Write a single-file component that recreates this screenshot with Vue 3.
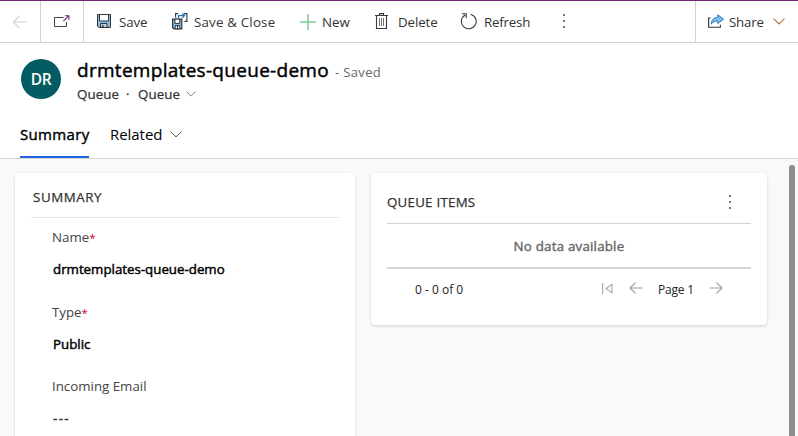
<script setup>
const fields = [
  { label: 'Name', required: true, value: 'drmtemplates-queue-demo', cls: 'name' },
  { label: 'Type', required: true, value: 'Public', cls: 'type' },
  { label: 'Incoming Email', required: false, value: '---', cls: 'email' },
]
</script>

<template>
  <div class="app">
    <header class="toolbar">
      <button class="cell back">
        <svg width="16" height="14" viewBox="0 0 16 14" fill="none" stroke="#d2d2d2" stroke-width="1.2"><path d="M7.5 .8 1.3 7l6.2 6.2M1.3 7H15" /></svg>
      </button>
      <button class="cell popout">
        <svg width="16" height="13" viewBox="0 0 16 13" fill="none"><path d="M9.5 2.5H.5v9h12V7" stroke="#4b3a50" stroke-width="1" /><path d="M9.4 6.2 14.4 1.2M11 .7h3.9v4" stroke="#742774" stroke-width="1.1" /></svg>
      </button>
      <div class="commands">
        <svg class="i-save" width="14" height="14" viewBox="0 0 14 14"><path d="M.5.5h13v13H1.8L.5 12.2z" fill="#83beec" stroke="#333" stroke-width="1" /><path d="M2.5.5h9v6.5h-9z" fill="#fff" stroke="#333" /><path d="M3.5 9.5h6.5v4H3.5z" fill="#ccc" stroke="#333" /><path d="M5 11.3h1.6v2.2H5z" fill="#333" /></svg>
        <span class="t t-save">Save</span>
        <svg class="i-saveclose" width="16" height="17" viewBox="0 0 16 17"><path d="M.6 6.1h9.2v9.8H2L.6 14.7z" fill="#83beec" stroke="#333" stroke-width="1.2" /><path d="M2.9 6.1h4.8v4.3H2.9z" fill="#fff" stroke="#333" /><path d="M3.2 12.6h4.5v3.3H3.2z" fill="#fff" stroke="#333" /><path d="M5.5 13v3" stroke="#333" /><path d="M6 .6H3.6v3.8M12 .6h2.9v7.8h-2.5" fill="none" stroke="#333" stroke-width="1.1" /><path d="M6.5 5V2.6h6M10.3.5l2.2 2.1-2.2 2.2" fill="none" stroke="#1473bd" stroke-width="1.2" /></svg>
        <span class="t t-sc">Save &amp; Close</span>
        <svg class="i-new" width="16" height="16" viewBox="0 0 16 16"><path d="M8 0v16M0 8h16" stroke="#79cd9b" stroke-width="1.5" /></svg>
        <span class="t t-new">New</span>
        <svg class="i-del" width="13" height="16" viewBox="0 0 13 16" fill="none" stroke="#3b3a39" stroke-width="1.1"><path d="M0 2.5h13M4.5 2.5V.6h4v1.9M1.5 2.5v13h10v-13" /><path d="M4.5 5v8M6.5 5v8M8.5 5v8" stroke-width=".7" /></svg>
        <span class="t t-del">Delete</span>
        <svg class="i-ref" width="17" height="17" viewBox="0 0 17 17" fill="none" stroke="#3b3a39" stroke-width="1.1"><path d="M10.6 1.2a7.4 7.4 0 1 1-5.4.7M2 .7h4.2v4.2" /></svg>
        <span class="t t-ref">Refresh</span>
        <span class="dots"><i /><i /><i /></span>
      </div>
      <button class="cell share">
        <svg width="17" height="14" viewBox="0 0 17 14"><path d="M2.5 4H.6v9.3h11.8v-2.5" fill="none" stroke="#333" stroke-width="1.1" /><path d="M9.8.8 15.6 5.2 9.8 9.5V7.1C6.5 7 4.7 8 3.2 10.2 3.5 6 5.8 3.6 9.8 3.3z" fill="#83beec" stroke="#1b6bb0" stroke-width=".9" /></svg>
        <span class="t t-share">Share</span>
        <svg width="12" height="7" viewBox="0 0 12 7" fill="none" stroke="#ad7642" stroke-width="1.1"><path d="m.5.6 5.5 5.3L11.5.6" /></svg>
      </button>
    </header>

    <section class="record">
      <div class="identity">
        <div class="avatar"><span>DR</span></div>
        <div class="titles">
          <div class="title-row"><h1>drmtemplates-queue-demo</h1><span class="saved">- Saved</span></div>
          <div class="sub"><span class="q1">Queue</span><span class="dot">·</span><span class="q2">Queue</span>
            <svg width="10" height="6" viewBox="0 0 10 6" fill="none" stroke="#777" stroke-width=".9"><path d="m.4.5 4.6 4.6L9.6.5" /></svg>
          </div>
        </div>
      </div>
      <nav class="tabs">
        <span class="tab active">Summary</span>
        <span class="tab related">Related</span>
        <svg width="12" height="7" viewBox="0 0 12 7" fill="none" stroke="#555b36" stroke-width="1"><path d="m.5.6 5.5 5.3L11.5.6" /></svg>
      </nav>
    </section>

    <main class="body">
      <section class="card summary">
        <h2>SUMMARY</h2>
        <div v-for="f in fields" :key="f.label" class="field" :class="f.cls">
          <div class="label">{{ f.label }}<b v-if="f.required">*</b></div>
          <div class="value">{{ f.value }}</div>
        </div>
      </section>
      <section class="card queue">
        <div class="queue-head"><h2>QUEUE ITEMS</h2><span class="dots"><i /><i /><i /></span></div>
        <div class="empty"><span>No data available</span></div>
        <div class="pager">
          <span class="count">0 - 0 of 0</span>
          <svg class="first" width="11" height="11" viewBox="0 0 11 11" fill="none" stroke="#a3aaa0" stroke-width="1.1"><path d="M.6 0v11M10 1.2v8.6L4 5.5z" /></svg>
          <svg class="prev" width="14" height="12" viewBox="0 0 14 12" fill="none" stroke="#a09f8b" stroke-width="1.1"><path d="M6.5.5 1 6l5.5 5.5M1 6h12.5" /></svg>
          <span class="page">Page 1</span>
          <svg class="next" width="14" height="12" viewBox="0 0 14 12" fill="none" stroke="#a09f9b" stroke-width="1.1"><path d="M7.5.5 13 6l-5.5 5.5M13 6H.5" /></svg>
        </div>
      </section>
      <div class="scrollbar" />
    </main>
  </div>
</template>

<style>
body { margin: 0; overflow: hidden; }
</style>

<style scoped>
.app { width: 798px; height: 436px; display: flex; flex-direction: column; overflow: hidden; background: #fff; color: #333; font-family: "Open Sans", "Noto Sans", sans-serif; font-size: 13.3px; white-space: nowrap; }
* { box-sizing: border-box; }
svg { display: block; flex: none; }
h1, h2 { margin: 0; }
span { flex: none; }
.toolbar { height: 43px; flex: none; display: flex; border-top: 1px solid #742774; border-bottom: 1px solid #d2d2d2; }
.cell { border: 0; background: none; padding: 0; font: inherit; color: inherit; display: flex; align-items: center; }
.back { width: 41px; padding-left: 12px; border-right: 1px solid #d2d2d2; }
.popout { width: 43px; padding-left: 13px; border-right: 1px solid #d2d2d2; }
.popout svg { margin-top: -1px; }
.commands { flex: 1; display: flex; align-items: center; padding-left: 13px; }
.t { line-height: 20px; padding-top: 1px; }
.i-save, .i-del { margin-top: -1px; }
.t-save { width: 61px; padding-left: 8px; letter-spacing: -.1px; }
.i-saveclose { margin-top: -1px; }
.t-sc { width: 112px; padding-left: 6px; letter-spacing: .2px; }
.t-new { width: 59px; padding-left: 6px; }
.t-del { width: 72px; padding-left: 10px; letter-spacing: -.1px; }
.t-ref { width: 86px; padding-left: 7px; letter-spacing: -.2px; }
.dots { display: flex; flex-direction: column; gap: 4px; width: 2px; }
.dots i { width: 2px; height: 2px; background: #5d7a98; }
.commands .dots { gap: 4px; margin-top: -1px; }
.share { width: 103px; border-left: 1px solid #d2d2d2; padding-left: 12px; }
.share > svg:first-child { margin-top: -2px; }
.t-share { width: 48px; padding-left: 4px; text-align: left; letter-spacing: -.2px; }

.record { height: 116px; flex: none; border-bottom: 1px solid #d8d8d6; display: flex; flex-direction: column; justify-content: space-between; }
.identity { display: flex; padding: 15px 0 0 21px; }
.avatar { width: 40px; height: 40px; margin-top: 1px; border-radius: 50%; background: #035c62; color: #fff; display: flex; align-items: center; justify-content: center; font-size: 15.5px; font-weight: 600; letter-spacing: -.4px; }
.titles { padding-left: 16px; }
.title-row { display: flex; align-items: baseline; height: 26px; line-height: 24px; }
h1 { width: 258px; color: #000; font-size: 19px; font-weight: 400; letter-spacing: .29px; -webkit-text-stroke: .45px #000; }
.saved { color: #666; font-size: 13px; letter-spacing: .35px; }
.sub { display: flex; align-items: center; height: 20px; color: #333; -webkit-text-stroke: .25px #333; letter-spacing: .1px; }
.q1 { width: 49px; }
.dot { width: 12px; }
.q2 { width: 48px; }
.tabs { display: flex; align-items: center; height: 47px; padding-left: 20px; color: #000; font-size: 15px; }
.tabs svg { margin-left: -1px; }
.tab { height: 47px; line-height: 47px; }
.active { width: 69px; letter-spacing: .33px; -webkit-text-stroke: .4px #000; border-bottom: 2px solid #2266e3; }
.related { width: 82px; padding-left: 21px; letter-spacing: -.05px; }

.body { flex: 1; min-height: 0; display: flex; align-items: flex-start; padding: 14px 0 0 15px; background: #faf9f8; }
.card { background: #fff; border-radius: 4px; box-shadow: 0 1px 3px rgba(0, 0, 0, .17); }
.card h2 { color: #333; font-size: 13.3px; font-weight: 400; -webkit-text-stroke: .25px #333; letter-spacing: .25px; }
.summary { width: 340px; height: 290px; padding: 0 16px; }
.summary h2 { height: 45px; padding-left: 2px; line-height: 48px; letter-spacing: .6px; border-bottom: 1px solid #e5e5e3; }
.field { height: 75px; padding: 9px 0 0 21px; }
.email { height: 74px; padding-top: 8px; }
.label { height: 20px; line-height: 20px; color: #444; }
.label b { color: #d0002d; font-weight: 400; font-size: 11.5px; line-height: 10px; }
.value { padding: 12px 0 0 1px; line-height: 20px; color: #000; letter-spacing: 0; -webkit-text-stroke: .45px #000; }
.email .value { letter-spacing: 1.4px; color: #333; -webkit-text-stroke: .35px #333; }
.queue { width: 396px; height: 152px; margin-left: 16px; padding: 0 16px; }
.queue-head { height: 51px; display: flex; align-items: center; justify-content: space-between; padding: 7px 20px 0 0; border-bottom: 1px solid #d3d3d3; }
.empty { height: 45px; display: flex; align-items: center; justify-content: center; border-bottom: 2px solid #d6d6d6; color: #666; letter-spacing: .22px; -webkit-text-stroke: .4px #666; }
.pager { display: flex; align-items: center; height: 42px; padding-left: 28px; font-size: 12px; color: #222; }
.pager svg { margin-top: -4px; }
.count { width: 187px; margin-top: -1px; }
.prev { margin-left: 16px; }
.page { width: 51px; margin-left: 15px; margin-top: -1px; letter-spacing: -.2px; }
.scrollbar { width: 6px; height: 290px; margin: -8px 0 0 22px; border-radius: 3px 3px 0 0; background: #8d8d8b; }
</style>
